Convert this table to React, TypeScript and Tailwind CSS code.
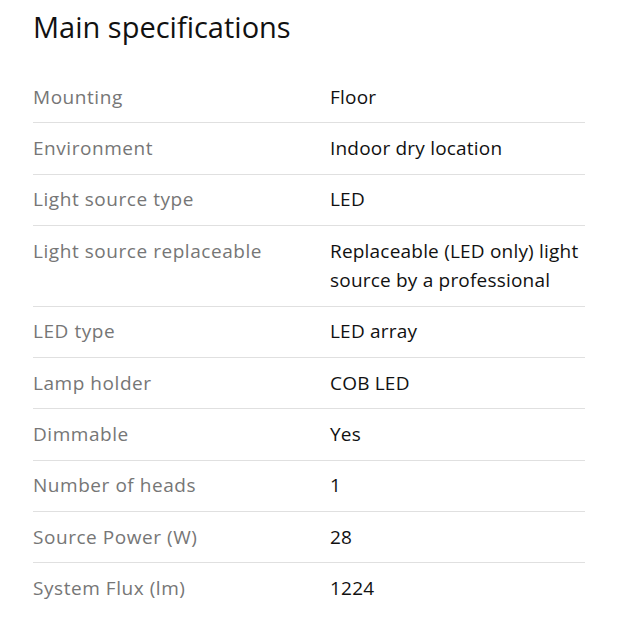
import React from "react";

const rows: [string, string][] = [
  ["Mounting", "Floor"],
  ["Environment", "Indoor dry location"],
  ["Light source type", "LED"],
  ["Light source replaceable", "Replaceable (LED only) light source by a professional"],
  ["LED type", "LED array"],
  ["Lamp holder", "COB LED"],
  ["Dimmable", "Yes"],
  ["Number of heads", "1"],
  ["Source Power (W)", "28"],
  ["System Flux (lm)", "1224"],
];

export default function App() {
  return (
    <div className="bg-white w-[618px] h-[625px] pl-[33px] pr-[33px]" style={{ fontFamily: "'Open Sans', 'Noto Sans', sans-serif" }}>
      <h1 className="pt-[8px] text-[29px] leading-[38px] text-[#111]">Main specifications</h1>
      <div className="mt-[26px]">
        {rows.map(([k, v], i) => (
          <div
            key={k}
            className={`grid grid-cols-[297px_1fr] py-[10.7px] text-[19px] leading-[29px] ${i < rows.length - 1 ? "border-b border-[#e0e0e0]" : ""}`}
          >
            <div className="text-[#767676] font-medium tracking-[0.55px]">{k}</div>
            <div className="text-[#111] tracking-[0.2px]">{v}</div>
          </div>
        ))}
      </div>
    </div>
  );
}
